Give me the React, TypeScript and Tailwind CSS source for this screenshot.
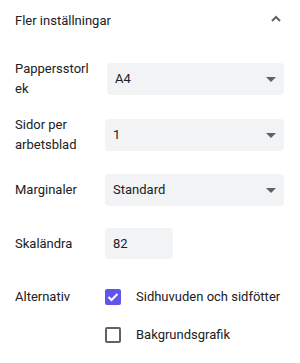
import React from "react";

function Caret() {
  return (
    <svg width="10" height="5" viewBox="0 0 10 5" className="shrink-0">
      <path d="M0 0 L10 0 L5 5 Z" fill="#5f6368" />
    </svg>
  );
}

function Select({ value, className = "" }: { value: string; className?: string }) {
  return (
    <div
      className={`h-[32px] flex items-center justify-between rounded-[4px] bg-[#f1f3f4] pl-[8px] pr-[8px] ${className}`}
    >
      <span>{value}</span>
      <Caret />
    </div>
  );
}

export default function App() {
  return (
    <div className="w-[300px] h-[363px] bg-white pl-[15px] font-['Roboto',sans-serif] text-[13px] leading-[20px] text-[#202124] overflow-hidden">
      <div className="h-[40px] flex items-center justify-between pr-[19px]">
        <span className="pt-[1px]">Fler inställningar</span>
        <svg width="10" height="7" viewBox="0 0 10 7" className="mt-[-3px]">
          <path d="M1 6 L5 2 L9 6" stroke="#5f6368" strokeWidth="2" fill="none" />
        </svg>
      </div>

      <div className="mt-[23px] flex items-center h-[32px]">
        <div className="w-[92px] shrink-0">
          <div className="w-[75px] [overflow-wrap:anywhere]">Pappersstorlek</div>
        </div>
        <Select value="A4" className="w-[177px]" />
      </div>

      <div className="mt-[24px] flex items-center h-[32px]">
        <div className="w-[90px] shrink-0">
          <div className="w-[75px] [overflow-wrap:anywhere]">Sidor per arbetsblad</div>
        </div>
        <Select value="1" className="w-[179px]" />
      </div>

      <div className="mt-[23px] flex items-center h-[32px]">
        <div className="w-[90px] shrink-0">Marginaler</div>
        <Select value="Standard" className="w-[179px]" />
      </div>

      <div className="mt-[22px] flex items-center h-[31px]">
        <div className="w-[90px] shrink-0">Skaländra</div>
        <div className="w-[68px] h-[31px] flex items-center rounded-[4px] bg-[#f1f3f4] pl-[8px]">82</div>
      </div>

      <div className="mt-[26px] flex">
        <div className="w-[90px] shrink-0 leading-[24px]">Alternativ</div>
        <div className="flex flex-col gap-[14px]">
          <div className="flex items-center h-[24px]">
            <div className="w-[16px] h-[16px] rounded-[2px] bg-[#5f55ec] flex items-center justify-center">
              <svg width="12" height="10" viewBox="0 0 12 10">
                <path d="M1.5 5 L4.5 8 L10.5 2" stroke="white" strokeWidth="2" fill="none" />
              </svg>
            </div>
            <span className="ml-[15px]">Sidhuvuden och sidfötter</span>
          </div>
          <div className="flex items-center h-[24px]">
            <div className="w-[16px] h-[16px] rounded-[2px] border-2 border-[#5f6368]" />
            <span className="ml-[15px]">Bakgrundsgrafik</span>
          </div>
        </div>
      </div>
    </div>
  );
}
